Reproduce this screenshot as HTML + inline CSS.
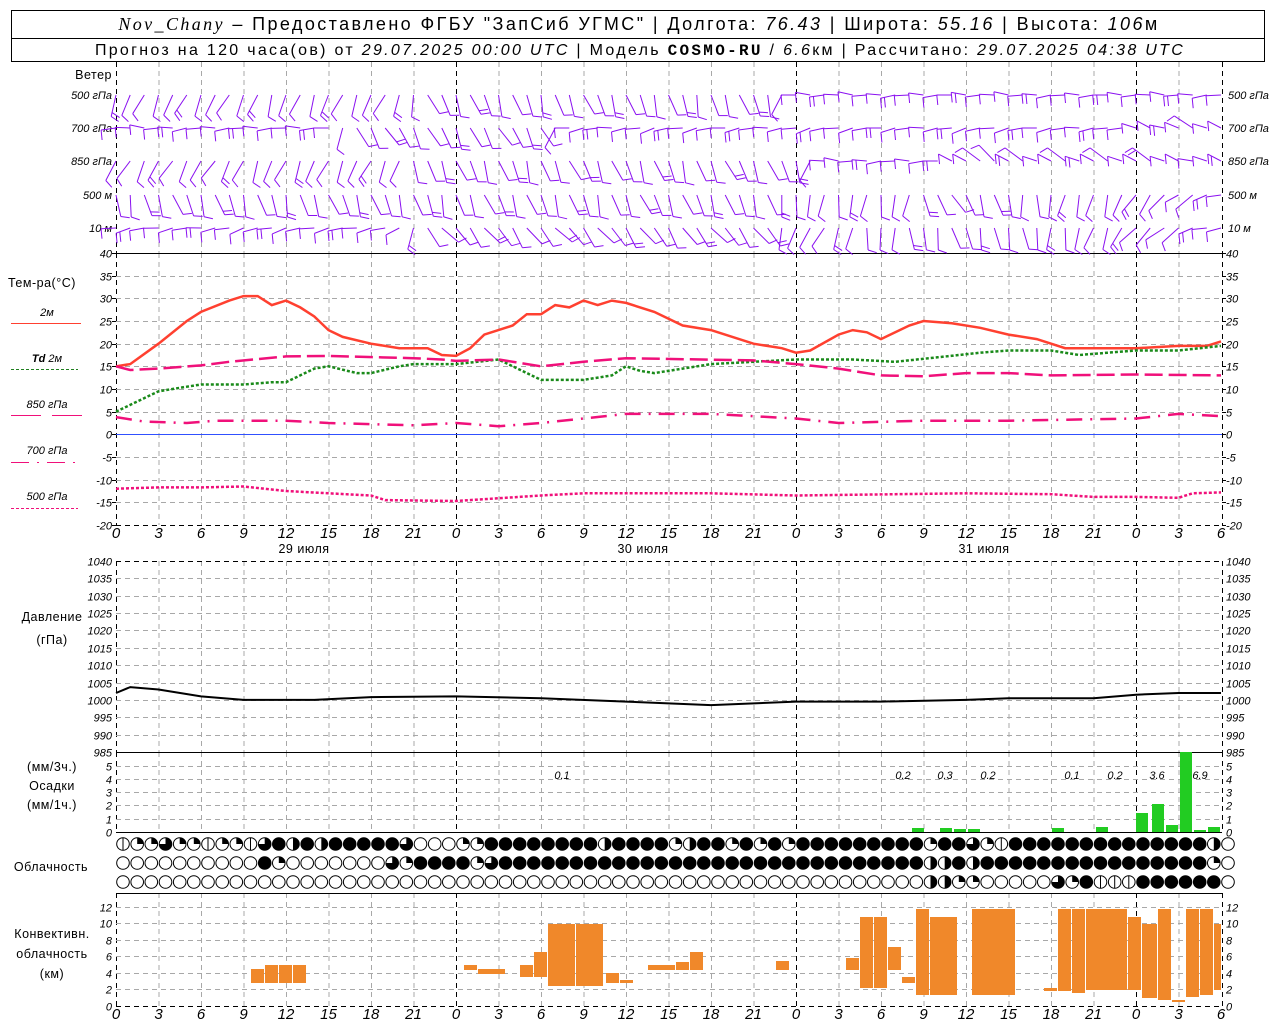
<!DOCTYPE html>
<html><head><meta charset="utf-8">
<style>
html,body{margin:0;padding:0;background:#fff;}
body{width:1280px;height:1024px;overflow:hidden;}
svg{display:block;}
text{font-family:"Liberation Sans",sans-serif;}
.n{font-style:italic;font-size:11px;}
.b{font-style:italic;font-size:15px;}
.l{font-size:12.5px;letter-spacing:0.5px;}
</style></head><body>
<svg id="s" width="1280" height="1024" xmlns="http://www.w3.org/2000/svg">
<rect x="11.5" y="10.5" width="1253" height="51" fill="none" stroke="#000"/>
<line x1="11" y1="38.5" x2="1265" y2="38.5" stroke="#000"/>
<text x="639" y="30" text-anchor="middle" font-size="18" letter-spacing="2.4"><tspan font-family="Liberation Serif" font-style="italic">Nov_Chany</tspan> – Предоставлено ФГБУ "ЗапСиб УГМС" | Долгота: <tspan font-style="italic">76.43</tspan> | Широта: <tspan font-style="italic">55.16</tspan> | Высота: <tspan font-style="italic">106</tspan>м</text>
<text x="640" y="55" text-anchor="middle" font-size="16" letter-spacing="2.3">Прогноз на 120 часа(ов) от <tspan font-style="italic">29.07.2025 00:00 UTC</tspan>  | Модель <tspan font-family="Liberation Mono" font-weight="bold">COSMO-RU</tspan> / <tspan font-style="italic">6.6</tspan>км | Рассчитано: <tspan font-style="italic">29.07.2025 04:38 UTC</tspan></text>
<g id="g"></g>
</svg>
<script>
var S=document.getElementById('g'),o='';
function X(h){return 116+h*340/24;}
function L(x1,y1,x2,y2,c,w,d){o+='<line x1="'+x1+'" y1="'+y1+'" x2="'+x2+'" y2="'+y2+'" stroke="'+c+'" stroke-width="'+(w||1)+'"'+(d?' stroke-dasharray="'+d+'"':'')+'/>';}
function T(x,y,t,cl,a,ex){o+='<text x="'+x+'" y="'+y+'" class="'+cl+'"'+(a?' text-anchor="'+a+'"':'')+(ex||'')+'>'+t+'</text>';}
var G='#a8a8a8',GD='5,4';
var panels=[[62,253],[253,525],[561,752],[752,832],[893,1006]];
panels.forEach(function(p){for(var h=0;h<78;h+=3){var day=(h%24==0);L(X(h)+.5,p[0],X(h)+.5,p[1],day?'#000':G,1,GD);} L(1222.5,p[0],1222.5,p[1],'#000',1,GD);});
var ty=function(v){return 253+(40-v)*272/60;};
for(var v=40;v>=-20;v-=5){var y=Math.round(ty(v))+.5;if(v<40)L(116,y,1222,y,v==-20?'#000':G,1,GD);T(112,y+4,v,'n','end');T(1226,y+4,v,'n');L(112,y,116,y,'#000');L(1222,y,1226,y,'#000');}
L(116,253.5,1222,253.5,'#000');
L(116,434.5,1222,434.5,'#3050ff');
var py=function(v){return 561+(1040-v)*191/55;};
for(var v=1040;v>=985;v-=5){var y=Math.round(py(v))+.5;L(116,y,1222,y,(v==1040||v==985)?'#000':G,1,(v==985)?null:GD);T(112,y+4,v,'n','end',' font-size="9"');T(1226,y+4,v,'n','',' font-size="9"');}
for(var v=0;v<=5;v++){var y=Math.round(832-v*13.3)+.5;if(v>0)L(116,y,1222,y,G,1,GD);T(112,y+4,v,'n','end',' font-size="9"');T(1226,y+4,v,'n','',' font-size="9"');}
L(116,832.5,1222,832.5,'#000');
var cy=function(v){return 1006-v*8.27;};
for(var v=0;v<=12;v+=2){var y=Math.round(cy(v))+.5;if(v>0)L(116,y,1222,y,G,1,GD);T(112,y+4,v,'n','end',' font-size="9"');T(1226,y+4,v,'n','',' font-size="9"');}
L(116,893.5,1222,893.5,'#000');L(116,1006.5,1222,1006.5,'#000',1,GD);
[[538],[1019]].forEach(function(r){for(var h=0;h<=78;h+=3){T(X(h),r[0],h%24,'b','middle');}});
T(304,553,'29 июля','l','middle');T(643,553,'30 июля','l','middle');T(984,553,'31 июля','l','middle');
T(112,79,'Ветер','l','end');
var lv=[[95,'500 гПа'],[128,'700 гПа'],[161,'850 гПа'],[195,'500 м'],[228,'10   м']];
lv.forEach(function(a){T(112,a[0]+4,a[1],'n','end',' font-size="10.5"');T(1228,a[0]+4,a[1],'n','',' font-size="10.5"');});
T(8,287,'Тем-ра(°С)','l');
T(47,316,'2м','n','middle',' font-size="11" font-style="normal"');L(11,323.5,81,323.5,'#ff4030');
T(47,362,'<tspan font-style="italic" font-weight="bold">Td</tspan>   2м','n','middle',' font-size="11" font-style="normal"');L(11,369.5,78,369.5,'#208020',1,'3,2');
T(47,408,'850 гПа','n','middle',' font-size="11"');L(11,415.5,41,415.5,'#f0107a');L(52,415.5,82,415.5,'#f0107a');
T(47,454,'700 гПа','n','middle',' font-size="11"');L(11,462.5,78,462.5,'#f0107a',1,'18,8,2,8');
T(47,500,'500 гПа','n','middle',' font-size="11"');L(11,508.5,78,508.5,'#f0107a',1,'3,2');
T(52,621,'Давление','l','middle');T(52,644,'(гПа)','l','middle');
T(52,771,'(мм/3ч.)','l','middle');T(52,790,'Осадки','l','middle');T(52,809,'(мм/1ч.)','l','middle');
T(51,871,'Облачность','l','middle');
T(52,938,'Конвективн.','l','middle');T(52,958,'облачность','l','middle');T(52,978,'(км)','l','middle');
function curve(pts,f,c,w,d){var s='';var n=pts.length/2;for(var i=0;i<n;i++){s+=(i?'L':'M')+X(pts[2*i]).toFixed(1)+','+f(pts[2*i+1]).toFixed(1);}o+='<path d="'+s+'" fill="none" stroke="'+c+'" stroke-width="'+w+'"'+(d?' stroke-dasharray="'+d+'"':'')+'/>';}
curve([0,15,1,15.5,3,20,5,25,6,27,8,29.5,9,30.5,10,30.5,11,28.5,12,29.5,13,28,14,26,15,23,16,21.5,18,20,20,19,22,19,23,17.5,24,17.3,25,19,26,22,28,24,29,26.5,30,26.5,31,28.5,32,28,33,29.5,34,28.5,35,29.5,36,29,38,27,40,24,42,23,45,20,47,19,48,18,49,18.5,51,22,52,23,53,22.5,54,21,56,24,57,25,59,24.5,61,23.5,63,22,65,21,67,19,69,19,72,19,75,19.5,77,19.5,78,20.5],ty,'#ff4030',2.5);
curve([0,5,2,8,3,9.5,5,10.5,6,11,9,11,11,11.5,12,11.5,13,13,14,14.5,15,15,17,13.5,18,13.5,20,15,21,15.5,24,15.5,27,16.5,28,15,30,12,33,12,35,13,36,15,37,14,38,13.5,40,14.5,42,15.5,45,16,48,16.5,52,16.5,55,16,58,17,61,18,63,18.5,66,18.5,68,17.5,70,18,72,18.5,75,18.5,78,19.5],ty,'#1a8a1a',2.5,'3,2');
curve([0,15,1,14.2,3,14.5,6,15.2,8,16,12,17.2,15,17.3,21,16.8,23,16.5,24,16.2,27,16.5,30,15,33,16,36,16.8,45,16.3,48,15.5,51,14.5,54,13,57,12.8,60,13.5,63,13.5,66,13,72,13.2,78,13],ty,'#f0107a',2.5,'18,6');
curve([0,3.8,2,2.8,5,2.5,7,3,12,3,15,2.5,21,2,24,2.5,27,1.8,30,2.5,33,3.5,36,4.5,42,4.5,48,3.5,51,2.5,57,3,63,3,72,3.5,75,4.5,78,4],ty,'#f0107a',2.5,'16,8,2,8');
curve([0,-12,3,-11.7,6,-11.7,9,-11.5,12,-12.5,15,-13,18,-13.5,19,-14.5,24,-14.7,30,-13.5,33,-13,42,-13,48,-13.5,60,-13,66,-13.2,69,-13.8,72,-13.8,75,-14,76,-13,78,-12.8],ty,'#f0107a',2.5,'3,2');
curve([0,1002,1,1003.7,3,1003,6,1001,9,1000,14,1000,18,1000.8,24,1001,30,1000.5,36,999.5,42,998.5,48,999.5,54,999.5,60,1000,63,1000.5,69,1000.5,72,1001.5,75,1002,78,1002],py,'#000',2);
var GR='#22cc22';
[[912,828],[940,828],[954,829],[968,829],[1052,828],[1096,827],[1136,813],[1152,804],[1166,825],[1180,752],[1194,830],[1208,827]].forEach(function(b){o+='<rect x="'+b[0]+'" y="'+b[1]+'" width="12" height="'+(832-b[1])+'" fill="'+GR+'"/>';});
[[562,'0.1'],[903,'0.2'],[945,'0.3'],[988,'0.2'],[1072,'0.1'],[1115,'0.2'],[1157,'3.6'],[1200,'6.9']].forEach(function(a){T(a[0],779,a[1],'n','middle',' font-size="13"');});
var OR='#f0882a';
[[251,265,969,983],[265,279,965,983],[279,293,965,983],[293,307,965,983],[464,478,965,970],[478,506,969,974],[520,534,965,977],[534,548,952,977],[548,576,924,986],[576,604,924,986],[606,620,973,983],[620,634,980,983],[648,676,965,970],[676,690,962,970],[690,704,952,970],[776,790,961,970],[846,860,958,970],[860,874,917,988],[874,888,917,988],[888,902,947,970],[902,916,977,983],[916,930,909,995],[930,958,917,995],[972,1016,909,995],[1044,1058,988,991],[1058,1072,909,991],[1072,1086,909,993],[1086,1128,909,990],[1128,1142,917,990],[1142,1158,924,998],[1158,1172,909,1000],[1172,1186,1000,1002],[1186,1200,909,997],[1200,1214,909,995],[1214,1222,924,990]].forEach(function(b){o+='<rect x="'+b[0]+'" y="'+b[2]+'" width="'+(b[1]-b[0]-1)+'" height="'+(b[3]-b[2])+'" fill="'+OR+'"/>';});
var rows=[[844,"511311511534242444443000114444444424444124414141444444444144315444444444444442"],
[863,"000000000041000000031444413444444444444444444444444444444224244444444444444441"],
[882,"000000000000000000000000000000000000000000000000000000000221100000314555444444"]];
rows.forEach(function(r){for(var i=0;i<79;i++){var c=r[1][i]||'0',cx=(X(i)+7).toFixed(1),y=r[0],R=6.3;
o+='<circle cx="'+cx+'" cy="'+y+'" r="'+R+'" fill="'+(c=='4'?'#000':'#fff')+'" stroke="#000"/>';
var x=+cx;
if(c=='1')o+='<path d="M'+x+','+y+'V'+(y-R)+'A'+R+','+R+' 0 0 1 '+(x+R)+','+y+'Z"/>';
if(c=='2')o+='<path d="M'+x+','+(y-R)+'A'+R+','+R+' 0 0 1 '+x+','+(y+R)+'Z"/>';
if(c=='3')o+='<path d="M'+x+','+y+'V'+(y-R)+'A'+R+','+R+' 0 1 1 '+(x-R)+','+y+'Z"/>';
if(c=='5')L(x,y-R,x,y+R,'#000');
}});
var P='#8a10f0';
function ang(row,h){var k={0:[[0,115],[20,110],[22,70],[46,75],[48,180],[78,180]],1:[[0,180],[15,175],[17,60],[30,65],[32,170],[70,170],[72,200],[78,205]],2:[[0,120],[20,110],[22,70],[48,70],[50,180],[58,180],[60,215],[78,200]],3:[[0,75],[46,70],[48,100],[56,95],[58,60],[70,110],[78,160]],4:[[0,170],[20,165],[22,50],[46,55],[48,120],[60,70],[70,110],[78,175]]}[row];
for(var i=0;i<k.length-1;i++){if(h<=k[i+1][0]){var t=(h-k[i][0])/(k[i+1][0]-k[i][0]);return k[i][1]+t*(k[i+1][1]-k[i][1]);}}return k[k.length-1][1];}
lv.forEach(function(a,r){for(var h=0;h<=78;h++){var x=X(h),y=a[0];var an=ang(r,h)+((h*37+r*13)%11-5)*2.5;var rad=an*Math.PI/180;var horiz=(an>150&&an<210);var len=horiz?15:22;
var x2=x+len*Math.cos(rad),y2=y+len*Math.sin(rad);L(x.toFixed(1),y,x2.toFixed(1),y2.toFixed(1),P);
var fx,fy;
if(horiz){fx=x2+1;fy=y2+10;}else{fx=x2+9*Math.cos(rad-1.2);fy=y2+9*Math.sin(rad-1.2);}
L(x2.toFixed(1),y2.toFixed(1),fx.toFixed(1),fy.toFixed(1),P);
if((h+r)%5==0){var x3=x+(len-4)*Math.cos(rad),y3=y+(len-4)*Math.sin(rad);L(x3.toFixed(1),y3.toFixed(1),(x3+fx-x2).toFixed(1),(y3+fy-y2).toFixed(1),P);}
}});
S.innerHTML=o;
</script>
</body></html>
